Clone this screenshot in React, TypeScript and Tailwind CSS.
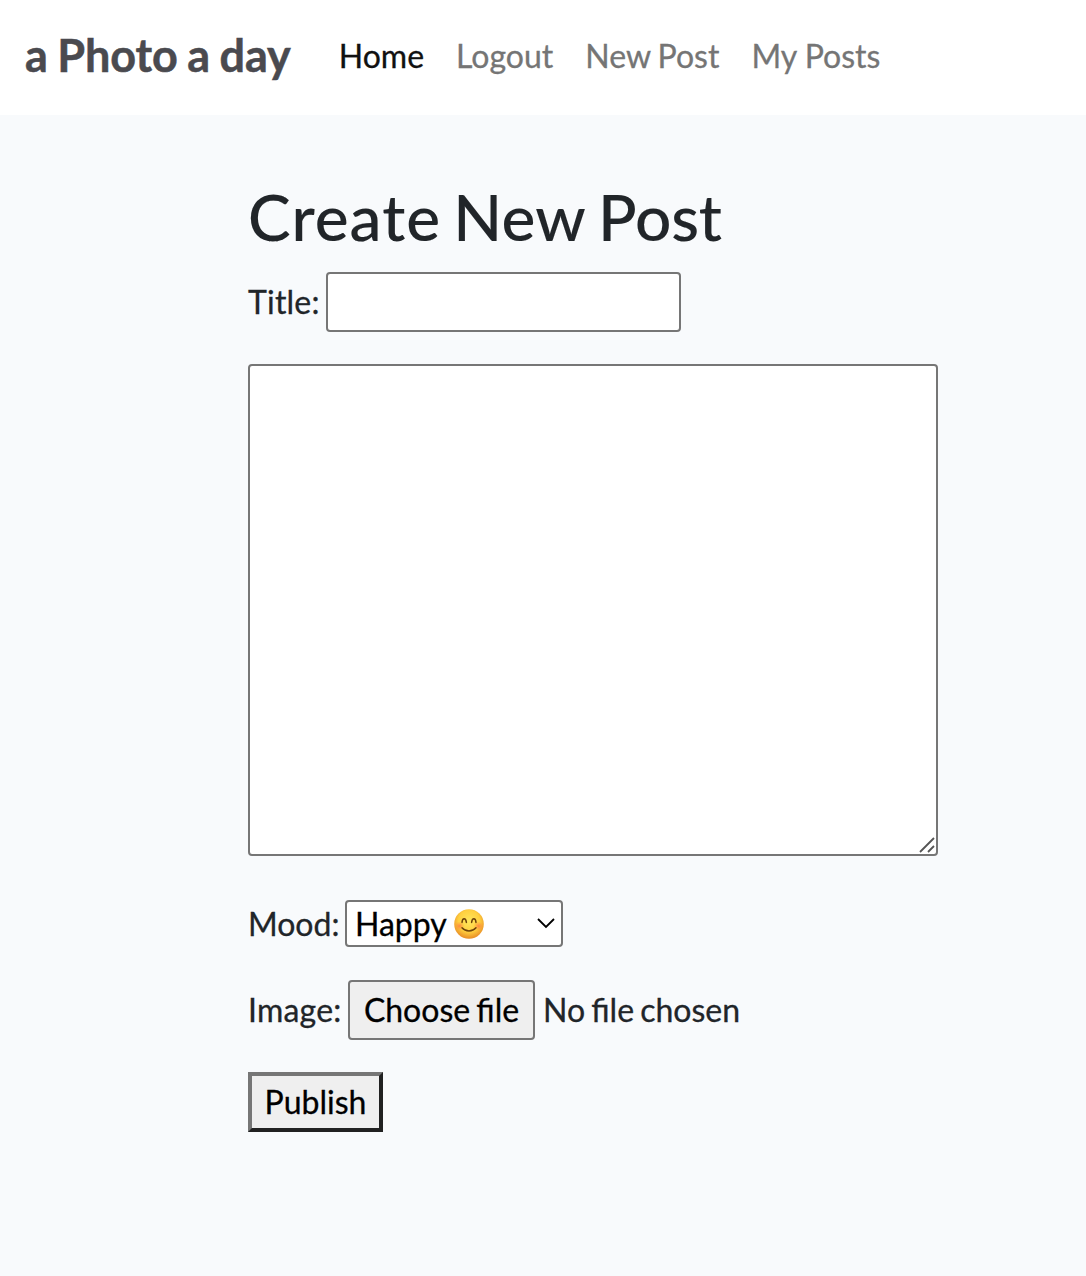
function SmilingFace() {
  return (
    <svg className="ml-[7px] shrink-0" width="30" height="30" viewBox="0 0 30 30" fill="none">
      <defs>
        <radialGradient id="face" cx="0.5" cy="0.4" r="0.6">
          <stop offset="0" stopColor="#ffe65c" />
          <stop offset="0.6" stopColor="#ffd040" />
          <stop offset="1" stopColor="#e88c25" />
        </radialGradient>
        <radialGradient id="blush">
          <stop offset="0" stopColor="#ff7043" stopOpacity="0.75" />
          <stop offset="1" stopColor="#ff8a3c" stopOpacity="0" />
        </radialGradient>
      </defs>
      <circle cx="15" cy="15" r="14.8" fill="url(#face)" />
      <ellipse cx="5.5" cy="17" rx="5" ry="4.5" fill="url(#blush)" />
      <ellipse cx="24.5" cy="17" rx="5" ry="4.5" fill="url(#blush)" />
      <g stroke="#6f430b" strokeLinecap="round" strokeLinejoin="round">
        <path d="M8 13.4c.4-4.8 3.8-4.8 4.4 0M17.6 13.4c.6-4.8 4-4.8 4.4 0" strokeWidth="1.5" />
        <path d="M8 18.8c3.6 4.3 10.4 4.3 14 0" strokeWidth="1.5" />
      </g>
    </svg>
  );
}

export default function App() {
  return (
    <div className="min-h-[1276px] bg-[#f8fafc] font-['Lato',sans-serif] text-[32px] leading-[51px] text-[#212529] [-webkit-text-stroke:0.3px]">
      <nav className="flex h-[115px] items-center bg-white pb-1 pl-[25px]">
        <a className="mr-12 text-[45px] font-bold tracking-[-0.05px] whitespace-nowrap text-[#4a4a4f] [word-spacing:-1.5px] [-webkit-text-stroke:0.5px]">a Photo a day</a>
        <div className="flex gap-8 whitespace-nowrap text-[#757575]">
          <a className="text-[#111]">Home</a>
          <a>Logout</a>
          <a className="[word-spacing:-1px]">New Post</a>
          <a>My Posts</a>
        </div>
      </nav>
      <main className="flex flex-col items-start pt-[63px] pl-[248px]">
        <h1 className="text-[64px] leading-[77px] font-medium [word-spacing:-4px] [-webkit-text-stroke:0.1px]">
          <span className="tracking-[1px]">Create</span> <span className="tracking-[0.2px]">New</span> <span className="tracking-[-0.2px]">Post</span>
        </h1>
        <label className="mt-[17px] flex items-center">
          <span className="w-[78px] pb-px tracking-[0.2px]">Title:</span>
          <input className="h-[60px] w-[355px] rounded-[4px] border-2 border-[#767676] bg-white px-2" />
        </label>
        <div className="relative mt-8 h-[492px] w-[690px]">
          <textarea className="block size-full resize-none rounded-[4px] border-2 border-[#767676] bg-white p-1" />
          <svg className="absolute right-[3px] bottom-[3px]" width="16" height="16" viewBox="0 0 16 16" stroke="#555" strokeWidth="1.8">
            <path d="M1 15 15 1M9 15l6-6" />
          </svg>
        </div>
        <div className="mt-[42px] flex items-center">
          <span className="w-[97px]">Mood:</span>
          <button className="flex h-[47px] w-[218px] items-center rounded-[4px] border-2 border-[#767676] bg-white pr-[6px] pl-2 text-black">
            Happy
            <SmilingFace />
            <svg className="mb-px ml-auto" width="18" height="12" viewBox="0 0 18 12" fill="none" stroke="#000" strokeWidth="1.8">
              <path d="m1 2 8 8 8-8" />
            </svg>
          </button>
        </div>
        <div className="mt-[31px] flex items-center">
          <span className="w-[100px] pb-px tracking-[0.2px]">Image:</span>
          <button className="h-[60px] w-[187px] rounded-[4px] border-2 border-[#767676] bg-[#efefef] pb-px text-black [word-spacing:-2px]">Choose file</button>
          <span className="ml-[8px] pb-px [word-spacing:-2px]">No file chosen</span>
        </div>
        <button className="mt-8 h-[60px] w-[135px] border-4 border-[#767676] border-r-[#212121] border-b-[#212121] bg-[#efefef] leading-[48px] text-black">Publish</button>
      </main>
    </div>
  );
}
